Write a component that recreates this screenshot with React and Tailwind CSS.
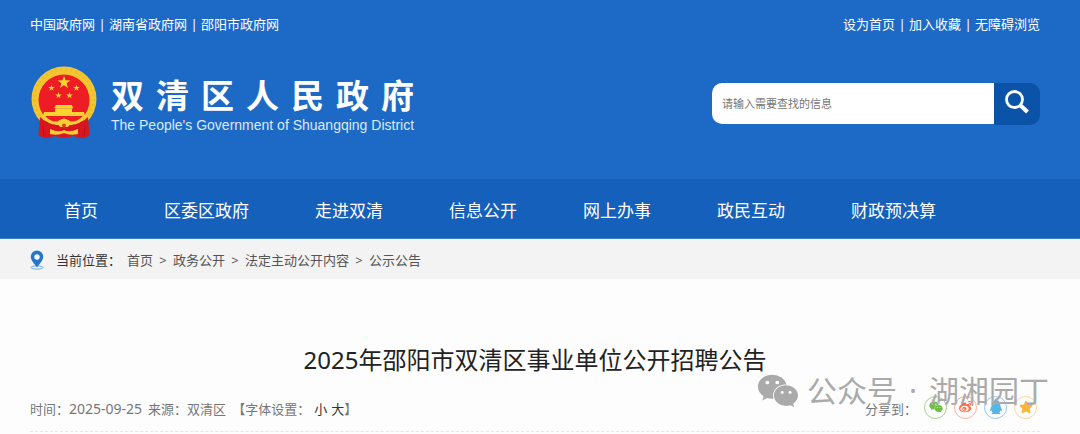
import { Fragment } from "react";
import { FaQq, FaStar, FaWeibo, FaWeixin } from "react-icons/fa";

const portals = ["中国政府网", "湖南省政府网", "邵阳市政府网"];
const tools = ["设为首页", "加入收藏", "无障碍浏览"];
const navItems = ["首页", "区委区政府", "走进双清", "信息公开", "网上办事", "政民互动", "财政预决算"];
const crumbs = ["首页", "政务公开", "法定主动公开内容", "公示公告"];
const shares = [
  { name: "微信", Icon: FaWeixin, style: "border-[#a5d38c] text-[#6dbe45]" },
  { name: "微博", Icon: FaWeibo, style: "border-[#ffb195] text-[#ff6a3c]" },
  { name: "QQ", Icon: FaQq, style: "border-[#92cbf1] text-[#56b6e7]" },
  { name: "QQ空间", Icon: FaStar, style: "border-[#fdd594] text-[#fdb53d]" },
];

function LinkList({ items }) {
  return (
    <div className="flex items-center">
      {items.map((item, i) => (
        <Fragment key={item}>
          {i > 0 && <span className="w-[14px] text-center">|</span>}
          <a href="#">{item}</a>
        </Fragment>
      ))}
    </div>
  );
}

const STAR = "M0-10 2.4-3.2 9.5-3.1 3.8 1.2 5.9 8.1 0 4-5.9 8.1-3.8 1.2-9.5-3.1-2.4-3.2Z";

function Emblem() {
  return (
    <svg viewBox="0 0 66 73" className="h-[73px] w-[66px] shrink-0" aria-hidden="true">
      <circle cx="33" cy="33" r="32.5" fill="#f3c62f" />
      <circle cx="33" cy="33" r="29.5" fill="none" stroke="#dda62a" strokeWidth="2.500" strokeDasharray="2 3" opacity=".35" />
      <circle cx="33" cy="34" r="25.500" fill="#ee1c25" />
      <g fill="#fbd432">
        <path d={STAR} transform="translate(33 16.5) scale(.68)" />
        <path d={STAR} transform="translate(20.5 22) scale(.34)" />
        <path d={STAR} transform="translate(45.500 22) scale(.34)" />
        <path d={STAR} transform="translate(27.500 29.500) scale(.34)" />
        <path d={STAR} transform="translate(38.500 29.500) scale(.34)" />
        <path d="M25 39h16l1 3h-1v4h12l1 4H12l1-4h11v-4h-1z" />
      </g>
      <path d="M24 42.500h18" stroke="#dfa22a" strokeWidth=".7" />
      <path d="M9 51q8 8 17 5l7-3 7 3q9 3 17-5l1.500 18q-6 6-15.500 1l-10 2-10-2q-9 5-15.500-1z" fill="#d9151f" />
      <path d="M12 50q7 8 15 7l6-3 6 3q8 1 15-7" fill="none" stroke="#f9d034" strokeWidth="3" />
      <path d="M24 59q3-6 9-6t9 6q-4-1-5 2h-8q-1-3-5-2z" fill="#f9d034" />
      <circle cx="33" cy="59.500" r="2" fill="#e23a22" />
      <path d="M19 63q9 4 14 1 5 3 14-1v5q-8 2-14-1-6 3-14 1z" fill="#f9d034" />
      <path d="M12 60l1 10M54 60l-1 10" stroke="#ad1420" strokeWidth="1" />
    </svg>
  );
}

function Pin() {
  return (
    <svg viewBox="0 0 14 20" className="h-5 w-[14px] shrink-0" aria-hidden="true">
      <ellipse cx="7" cy="17.500" rx="6" ry="1.600" fill="none" stroke="#72a7dc" />
      <path d="M7 .5a6.200 6.200 0 0 0-6.200 6.200c0 4 3.700 6.800 6.200 10.800 2.500-4 6.200-6.800 6.200-10.800A6.200 6.200 0 0 0 7 .5z" fill="#2576c9" />
      <circle cx="7" cy="7" r="2.700" fill="#fff" />
    </svg>
  );
}

export default function App() {
  return (
    <div className="relative bg-[#fdfdfd] font-['Noto_Sans','Noto_Sans_CJK_SC',sans-serif] text-[13px] leading-5">
      <header className="bg-[#1d6ac6] text-white">
        <div className="flex justify-between px-[30px] pt-[14px] pr-10">
          <LinkList items={portals} />
          <LinkList items={tools} />
        </div>
        <div className="flex items-start justify-between pt-8 pr-10 pb-10 pl-[31px]">
          <div className="flex items-start gap-[14px]">
            <Emblem />
            <div className="pt-2">
              <h1 className="flex gap-3 text-[33px] leading-[43px] font-bold">
                {[..."双清区人民政府"].map((c) => (
                  <span key={c}>{c}</span>
                ))}
              </h1>
              <p className="font-['Liberation_Sans',sans-serif] text-sm leading-4 text-[#dce9f8]">
                The People's Government of Shuangqing District
              </p>
            </div>
          </div>
          <form className="mt-[17px] flex w-[328px]" onSubmit={(e) => e.preventDefault()}>
            <input
              type="text"
              aria-label="搜索"
              placeholder="请输入需要查找的信息"
              className="h-[41px] min-w-0 flex-1 rounded-l-[10px] bg-white px-[10px] text-[11px] text-[#333] outline-none placeholder:text-[#757575]"
            />
            <button type="submit" aria-label="搜索" className="flex h-[42px] w-[46px] justify-center rounded-r-[10px] bg-[#0b52a9] pt-[6px]">
              <svg viewBox="0 0 26 26" className="size-[26px]" fill="none" stroke="#fff">
                <circle cx="10.500" cy="10.500" r="8" strokeWidth="2.800" />
                <path d="M16 16l7.500 7" strokeWidth="4.200" />
              </svg>
            </button>
          </form>
        </div>
        <nav className="flex h-[60px] items-center border-b border-[#3c80cb] bg-[#1560ba] pt-1 pl-[31px] text-[17px]">
          {navItems.map((item) => (
            <a key={item} href="#" className="px-[33px]">{item}</a>
          ))}
        </nav>
      </header>

      <div className="flex h-10 items-center bg-[#f3f3f3] px-[30px] pt-[2px] text-[#555]">
        <Pin />
        <span className="ml-3 w-[71px] text-[#333]">当前位置：</span>
        {crumbs.map((item, i) => (
          <Fragment key={item}>
            {i > 0 && <span className="w-5 text-center">&gt;</span>}
            <a href="#">{item}</a>
          </Fragment>
        ))}
      </div>

      <main className="pr-10 pb-[2px] pl-[30px]">
        <h2 className="pt-[61px] text-center text-2xl leading-10 text-[#222]">2025年邵阳市双清区事业单位公开招聘公告</h2>
        <div className="flex items-center justify-between border-b border-dashed border-[#e6e6e6] pt-[19px] pb-3 text-[#777]">
          <div className="flex items-center">
            <span>时间：</span>
            <span className="text-sm">2025-09-25</span>
            <span className="ml-[6px]">来源：双清区</span>
            <span className="ml-[6px]">【字体设置：</span>
            <button type="button" className="ml-1 text-[#333]">小</button>
            <button type="button" className="ml-1 text-[#333]">大</button>
            <span>】</span>
          </div>
          <div className="flex items-center gap-[7px] pr-[3px]">
            <span>分享到：</span>
            {shares.map(({ name, Icon, style }) => (
              <a key={name} href="#" aria-label={name} className={"-mt-2 -mb-1 flex size-[23px] items-center justify-center rounded-full border " + style}>
                <Icon className="size-[14px]" />
              </a>
            ))}
          </div>
        </div>
      </main>

      <div className="pointer-events-none absolute right-[31px] bottom-[22px] flex items-center text-[30px] leading-10 text-[#aaa]">
        <FaWeixin className="mr-2 size-[42px]" />
        <span>公众号</span>
        <span className="w-8 text-center">·</span>
        <span>湖湘园丁</span>
      </div>
    </div>
  );
}
